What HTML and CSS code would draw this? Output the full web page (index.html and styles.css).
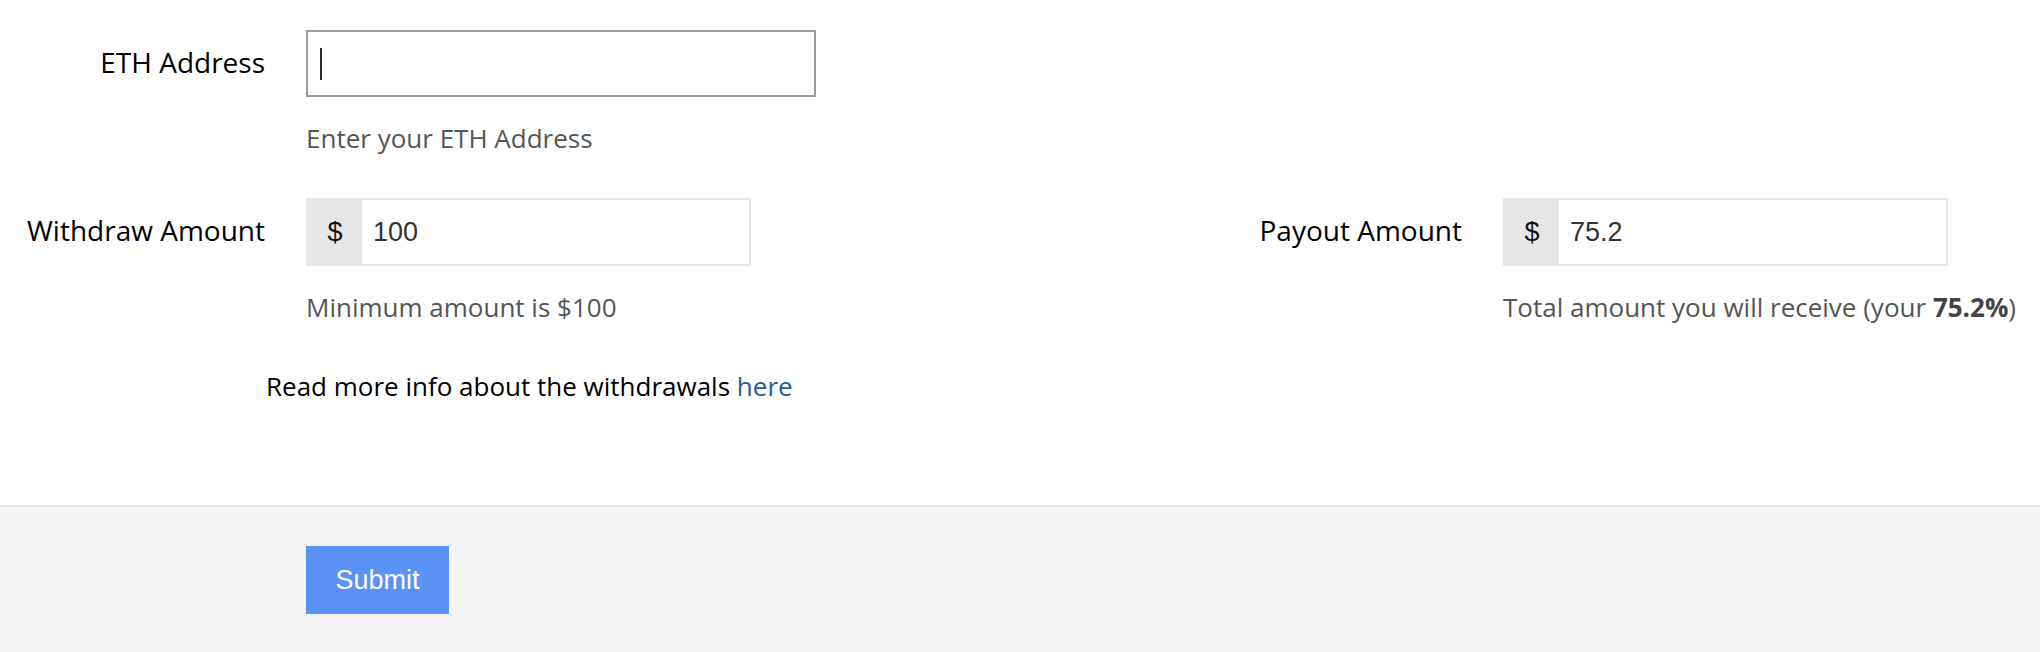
FILE: index.html
```html
<!DOCTYPE html>
<html>
<head>
<meta charset="utf-8">
<link rel="stylesheet" href="styles.css">
</head>
<body>
<form class="withdraw">
  <div class="content">
    <div class="field field-wide">
      <label class="label">ETH Address</label>
      <div class="text-input"><span class="caret"></span></div>
      <div class="help">Enter your ETH Address</div>
    </div>
    <div class="amount-row">
      <div class="field">
        <label class="label">Withdraw Amount</label>
        <div class="group"><span class="addon">$</span><span class="value">100</span></div>
        <div class="help">Minimum amount is $100</div>
      </div>
      <div class="field">
        <label class="label">Payout Amount</label>
        <div class="group"><span class="addon">$</span><span class="value">75.2</span></div>
        <div class="help">Total amount you will receive (your <b>75.2%</b>)</div>
      </div>
    </div>
    <p class="info">Read more info about the withdrawals <a href="#">here</a></p>
  </div>
  <div class="footer">
    <button type="button" class="submit">Submit</button>
  </div>
</form>
</body>
</html>
```

FILE: styles.css
```css
html, body {
  margin: 0;
  padding: 0;
  background: #ffffff;
}
body {
  font-family: "Open Sans", "Liberation Sans", sans-serif;
  color: #000;
}
.content {
  padding-top: 30px;
  padding-bottom: 101px;
}
.field {
  display: grid;
  grid-template-columns: 265px 445px;
  column-gap: 41px;
  align-items: center;
}
.field-wide {
  grid-template-columns: 265px 510px;
}
.label {
  text-align: right;
  font-size: 28px;
  line-height: 36px;
  padding-bottom: 4px;
  white-space: nowrap;
}
.text-input {
  box-sizing: border-box;
  height: 67px;
  border: 2px solid #9b9b9b;
  background: #fff;
  display: flex;
  align-items: center;
  padding-left: 12px;
}
.caret {
  width: 2px;
  height: 32px;
  background: #2a2a2a;
}
.help {
  grid-column: 2;
  margin-top: 23px;
  font-size: 26px;
  line-height: 36px;
  color: #555;
  white-space: nowrap;
}
.help b {
  color: #444;
  font-weight: 700;
}
.amount-row {
  display: grid;
  grid-template-columns: 1197px 1fr;
  margin-top: 42px;
}
.group {
  box-sizing: border-box;
  height: 68px;
  border: 2px solid #e6e6e6;
  display: flex;
  align-items: stretch;
  font-family: "Liberation Sans", Arial, sans-serif;
  font-size: 27px;
}
.addon {
  width: 54px;
  background: #e6e6e6;
  color: #111;
  display: flex;
  align-items: center;
  justify-content: center;
}
.value {
  display: flex;
  align-items: center;
  padding-left: 11px;
  color: #333;
}
.info {
  margin: 43px 0 0 266px;
  font-size: 26px;
  line-height: 36px;
}
.info a {
  color: #1f5e96;
  text-decoration: none;
}
.footer {
  border-top: 2px solid #e4e4e4;
  background: #f4f4f4;
  padding: 39px 0 38px 306px;
}
.submit {
  display: block;
  width: 143px;
  height: 68px;
  border: 0;
  background: #5a93f5;
  color: #fff;
  font-family: "Liberation Sans", Arial, sans-serif;
  font-size: 27px;
  padding: 0;
}
```
